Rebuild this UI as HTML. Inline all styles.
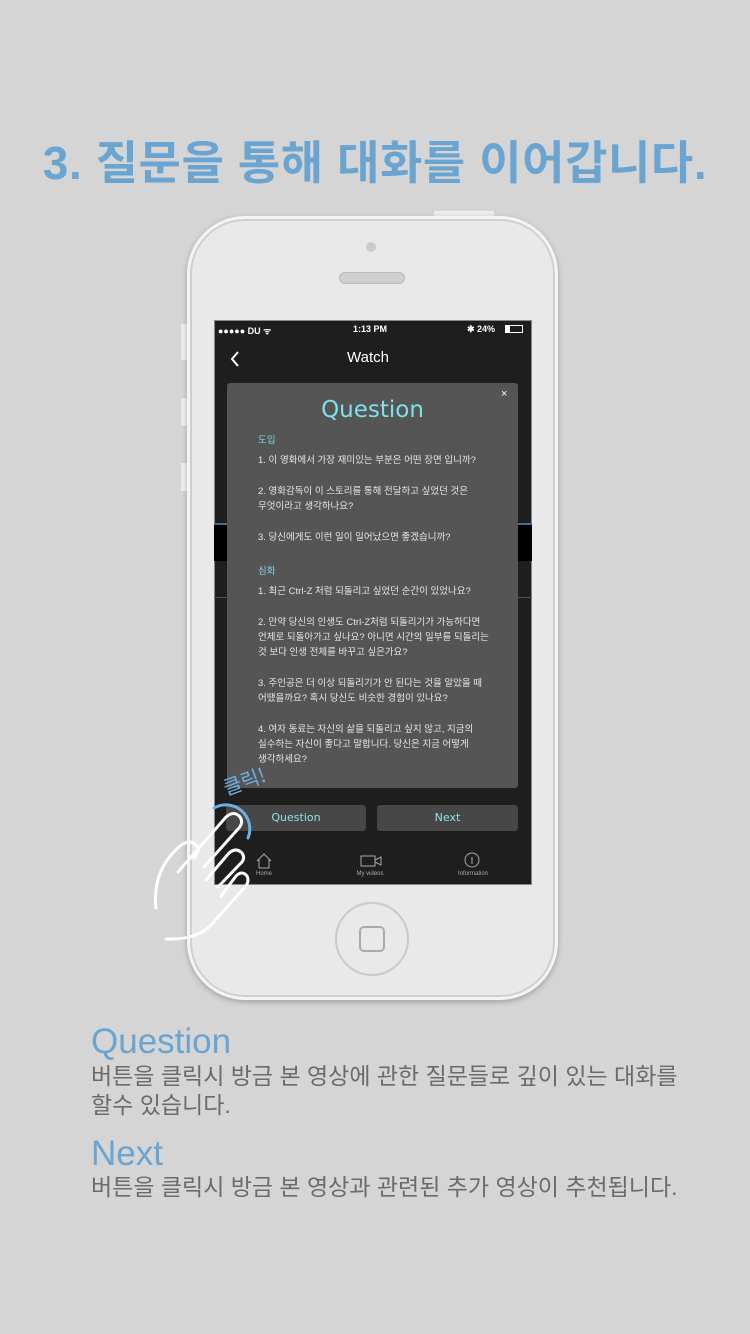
<!DOCTYPE html>
<html><head><meta charset="utf-8"><style>
*{margin:0;padding:0;box-sizing:border-box}
body{width:750px;height:1334px;background:#d5d5d5;position:relative;overflow:hidden;font-family:"Liberation Sans","Noto Sans CJK KR",sans-serif}
.a{position:absolute}
.title{left:0;width:750px;top:127px;text-align:center;font-size:46px;font-weight:bold;color:#6aa4d1;letter-spacing:0.6px}
.phone{left:187px;top:216px;width:371px;height:784px;border-radius:58px;background:#e9e9e9;border:3px solid #f4f4f4;box-shadow:0 2px 6px rgba(0,0,0,.25),inset 0 0 0 2px #cfcfcf}
.screen{left:214px;top:320px;width:318px;height:565px;background:#1e1e1e;border:1px solid #888}
.q{font-size:9.5px;color:#e6e6e6;line-height:15px}
.q div{margin-bottom:16px}
.q .h{color:#7fd6e6;margin-bottom:5px}
.btn{top:805px;height:26px;background:#474747;border-radius:3px;color:#8fe0ea;font-size:11px;text-align:center;line-height:26px;font-family:"DejaVu Sans",sans-serif}
.tab{font-size:6px;color:#aaa;text-align:center;width:60px}
.bt{left:91px;font-size:23px;color:#6b6b6b;line-height:29px}
.bh{left:91px;font-size:35px;color:#6aa4d1}
</style></head><body>
<div class="a title">3. 질문을 통해 대화를 이어갑니다.</div>
<div class="a" style="left:434px;top:211px;width:60px;height:5px;background:#eee;border-radius:2px"></div>
<div class="a" style="left:181px;top:324px;width:6px;height:36px;background:#eee"></div>
<div class="a" style="left:181px;top:398px;width:6px;height:28px;background:#eee"></div>
<div class="a" style="left:181px;top:463px;width:6px;height:28px;background:#eee"></div>
<div class="a phone"></div>
<div class="a" style="left:366px;top:242px;width:10px;height:10px;border-radius:50%;background:#ccc"></div>
<div class="a" style="left:339px;top:272px;width:66px;height:12px;border-radius:6px;background:#d0d0d0;border:1px solid #bbb"></div>
<div class="a" style="left:335px;top:902px;width:74px;height:74px;border-radius:50%;border:2px solid #c9c9c9;background:#e9e9e9"></div>
<div class="a" style="left:359px;top:926px;width:26px;height:26px;border-radius:5px;border:2px solid #aaa"></div>
<div class="a screen"></div>
<div class="a" style="left:218px;top:324px;font-size:9px;color:#fff;font-weight:bold">●●●●● DU ᯤ</div>
<div class="a" style="left:353px;top:324px;font-size:9px;color:#fff;font-weight:bold">1:13 PM</div>
<div class="a" style="left:467px;top:324px;font-size:9px;color:#fff;font-weight:bold">✱ 24%</div>
<div class="a" style="left:505px;top:325px;width:18px;height:8px;border:1px solid #fff"><div style="width:4px;height:6px;background:#fff"></div></div>
<svg class="a" style="left:229px;top:350px" width="12" height="18"><path d="M9 2L3 9l6 7" stroke="#fff" stroke-width="2" fill="none"/></svg>
<div class="a" style="left:347px;top:349px;font-size:15px;color:#fff">Watch</div>
<div class="a" style="left:214px;top:523px;width:318px;height:38px;background:#000;border-top:2px solid #3b6e99"></div>
<div class="a" style="left:214px;top:597px;width:318px;height:1px;background:#555"></div>
<div class="a" style="left:227px;top:383px;width:291px;height:405px;background:#555;border-radius:3px"></div>
<div class="a" style="left:501px;top:388px;color:#fff;font-size:11px">×</div>
<div class="a" style="left:227px;width:291px;top:397px;text-align:center;font-size:23px;color:#7fe0ea;font-family:'DejaVu Sans',sans-serif">Question</div>
<div class="a q" style="left:258px;top:433px;width:255px">
<div class="h">도입</div>
<div>1. 이 영화에서 가장 재미있는 부분은 어떤 장면 입니까?</div>
<div>2. 영화감독이 이 스토리를 통해 전달하고 싶었던 것은<br>무엇이라고 생각하나요?</div>
<div style="margin-bottom:19px">3. 당신에게도 이런 일이 일어났으면 좋겠습니까?</div>
<div class="h">심화</div>
<div>1. 최근 Ctrl-Z 처럼 되돌리고 싶었던 순간이 있었나요?</div>
<div>2. 만약 당신의 인생도 Ctrl-Z처럼 되돌리기가 가능하다면<br>언제로 되돌아가고 싶나요? 아니면 시간의 일부를 되돌리는<br>것 보다 인생 전체를 바꾸고 싶은가요?</div>
<div>3. 주인공은 더 이상 되돌리기가 안 된다는 것을 알았을 때<br>어땠을까요? 혹시 당신도 비슷한 경험이 있나요?</div>
<div>4. 여자 동료는 자신의 삶을 되돌리고 싶지 않고, 지금의<br>실수하는 자신이 좋다고 말합니다. 당신은 지금 어떻게<br>생각하세요?</div>
</div>
<div class="a btn" style="left:226px;width:140px">Question</div>
<div class="a btn" style="left:377px;width:141px">Next</div>
<svg class="a" style="left:255px;top:852px" width="18" height="18"><path d="M2 9L9 2l7 7M4 7v9h10V7" stroke="#aaa" fill="none"/></svg>
<svg class="a" style="left:360px;top:854px" width="22" height="14"><rect x="1" y="2" width="14" height="10" stroke="#aaa" fill="none"/><path d="M15 6l6-3v8l-6-3" stroke="#aaa" fill="none"/></svg>
<svg class="a" style="left:464px;top:852px" width="16" height="16"><circle cx="8" cy="8" r="7" stroke="#aaa" fill="none"/><path d="M8 5v7" stroke="#aaa"/></svg>
<div class="a tab" style="left:234px;top:871px">Home</div>
<div class="a tab" style="left:340px;top:871px">My videos</div>
<div class="a tab" style="left:443px;top:871px">Information</div>
<svg class="a" style="left:0;top:0" width="750" height="1334">
<text x="222" y="790" fill="#6ab0e6" font-size="20" font-family="Noto Sans CJK KR" transform="rotate(-20 240 780)">클릭!</text>
<path d="M214 808 A24 24 0 0 1 248 838" stroke="#6ab0e6" stroke-width="3" fill="none" stroke-linecap="round"/>
<g stroke="#fff" stroke-width="3" fill="none" stroke-linecap="round" stroke-linejoin="round">
<path d="M178 872 L226 817 Q234 810 240 817 Q244 823 238 829 L204 867"/>
<path d="M206 880 L229 853 Q236 847 242 853 Q246 859 240 864 L218 887"/>
<path d="M221 896 L236 876 Q242 870 247 876 Q250 882 244 888 L210 926 Q196 940 166 939"/>
<path d="M156 908 Q152 870 180 846 Q190 838 197 846 Q200 852 194 858"/>
</g>
</svg>
<div class="a bh" style="top:1022px">Question</div>
<div class="a bt" style="top:1062px">버튼을 클릭시 방금 본 영상에 관한 질문들로 깊이 있는 대화를<br>할수 있습니다.</div>
<div class="a bh" style="top:1134px">Next</div>
<div class="a bt" style="top:1173px">버튼을 클릭시 방금 본 영상과 관련된 추가 영상이 추천됩니다.</div>
</body></html>
